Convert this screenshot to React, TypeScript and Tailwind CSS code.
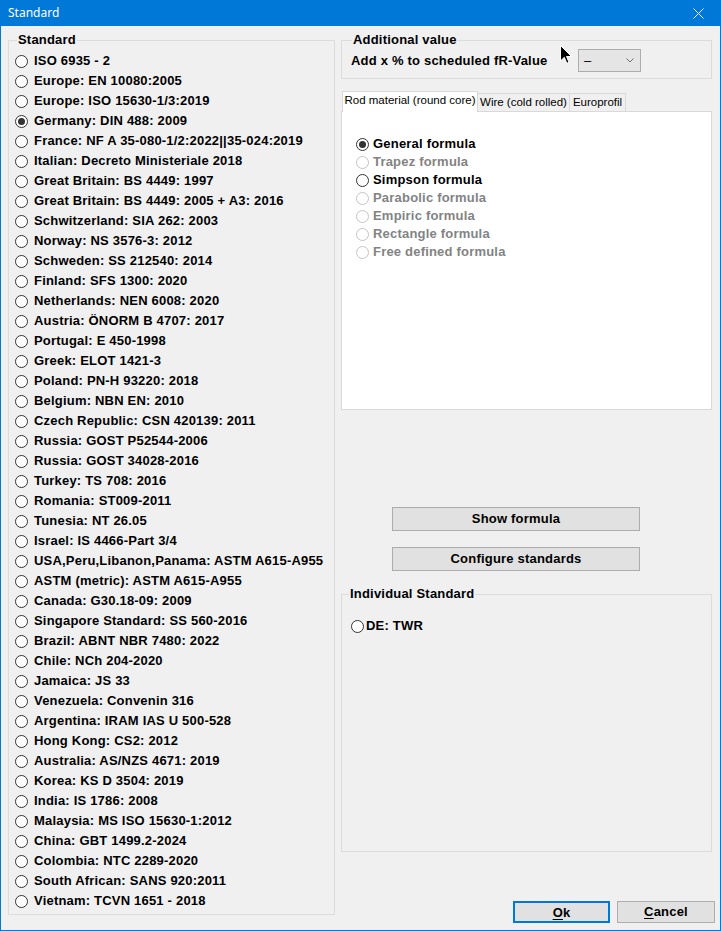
import React from 'react';
import clsx from 'clsx';

const standards = [
  'ISO 6935 - 2',
  'Europe: EN 10080:2005',
  'Europe: ISO 15630-1/3:2019',
  'Germany: DIN 488: 2009',
  'France: NF A 35-080-1/2:2022||35-024:2019',
  'Italian: Decreto Ministeriale 2018',
  'Great Britain: BS 4449: 1997',
  'Great Britain: BS 4449: 2005 + A3: 2016',
  'Schwitzerland: SIA 262: 2003',
  'Norway: NS 3576-3: 2012',
  'Schweden: SS 212540: 2014',
  'Finland: SFS 1300: 2020',
  'Netherlands: NEN 6008: 2020',
  'Austria: ÖNORM B 4707: 2017',
  'Portugal: E 450-1998',
  'Greek: ELOT 1421-3',
  'Poland: PN-H 93220: 2018',
  'Belgium: NBN EN: 2010',
  'Czech Republic: CSN 420139: 2011',
  'Russia: GOST P52544-2006',
  'Russia: GOST 34028-2016',
  'Turkey: TS 708: 2016',
  'Romania: ST009-2011',
  'Tunesia: NT 26.05',
  'Israel: IS 4466-Part 3/4',
  'USA,Peru,Libanon,Panama: ASTM A615-A955',
  'ASTM (metric): ASTM A615-A955',
  'Canada: G30.18-09: 2009',
  'Singapore Standard: SS 560-2016',
  'Brazil: ABNT NBR 7480: 2022',
  'Chile: NCh 204-2020',
  'Jamaica: JS 33',
  'Venezuela: Convenin 316',
  'Argentina: IRAM IAS U 500-528',
  'Hong Kong: CS2: 2012',
  'Australia: AS/NZS 4671: 2019',
  'Korea: KS D 3504: 2019',
  'India: IS 1786: 2008',
  'Malaysia: MS ISO 15630-1:2012',
  'China: GBT 1499.2-2024',
  'Colombia: NTC 2289-2020',
  'South African: SANS 920:2011',
  'Vietnam: TCVN 1651 - 2018',
];

const formulas = [
  { label: 'General formula', checked: true },
  { label: 'Trapez formula', disabled: true },
  { label: 'Simpson formula' },
  { label: 'Parabolic formula', disabled: true },
  { label: 'Empiric formula', disabled: true },
  { label: 'Rectangle formula', disabled: true },
  { label: 'Free defined formula', disabled: true },
];

const Radio = ({ checked, disabled }: { checked?: boolean; disabled?: boolean }) => (
  <span
    className={clsx(
      'flex h-[13px] w-[13px] shrink-0 items-center justify-center rounded-full border bg-white',
      disabled ? 'border-[#c4c4c4]' : 'border-[#333333]'
    )}
  >
    {checked && <span className="h-[7px] w-[7px] rounded-full bg-[#333333]" />}
  </span>
);

export default function App() {
  return (
    <div
      className="relative flex h-[931px] w-[721px] flex-col border-x border-b border-[#0078d7] bg-[#f0f0f0] text-black"
      style={{ fontFamily: '"Liberation Sans", Arial, sans-serif' }}
    >
      {/* title bar */}
      <div className="flex h-[26px] shrink-0 items-center justify-between bg-[#0078d7] pl-[7px] pr-[16px] text-white">
        <span className="font-['Noto_Sans'] text-[12px]">Standard</span>
        <svg width="11" height="11" viewBox="0 0 11 11" className="mt-px">
          <path d="M0.5 0.5 L10.5 10.5 M10.5 0.5 L0.5 10.5" stroke="white" strokeWidth="1" />
        </svg>
      </div>

      <div className="flex flex-1 text-[13px] font-bold tracking-[0.2px]">
        {/* left group */}
        <fieldset className="ml-[7px] mt-[6px] w-[327px] self-start border border-[#dcdcdc] px-[6px] pb-[3px]">
          <legend className="ml-[2px] px-[1px] leading-[16px]">Standard</legend>
          <div className="pt-[3px]">
            {standards.map((s) => (
              <div key={s} className="flex h-[20px] items-center gap-[6px] whitespace-nowrap">
                <Radio checked={s === 'Germany: DIN 488: 2009'} />
                <span>{s}</span>
              </div>
            ))}
          </div>
        </fieldset>

        {/* right column */}
        <div className="ml-[6px] mt-[6px] flex w-[374px] flex-col">
          <fieldset className="w-[371px] border border-[#dcdcdc] px-[9px] pb-[6px]">
            <legend className="ml-[1px] px-[1px] leading-[16px]">Additional value</legend>
            <div className="mt-px flex items-center">
              <span className="w-[227px] whitespace-nowrap">Add x % to scheduled fR-Value</span>
              <div className="flex h-[23px] w-[63px] items-center justify-between border border-[#adadad] bg-[#e5e5e5] pl-[5px] pr-[6px] font-normal">
                <span>–</span>
                <svg width="8" height="5" viewBox="0 0 8 5">
                  <path d="M0.5 0.5 L4 4 L7.5 0.5" stroke="#6d6d6d" fill="none" strokeWidth="1" />
                </svg>
              </div>
            </div>
          </fieldset>

          {/* tabs */}
          <div className="mt-[12px] flex h-[20px] items-end text-[11.5px] font-normal tracking-normal">
            <div className="relative z-10 -mb-px ml-px flex h-[21px] w-[136px] items-center justify-center border border-b-0 border-[#d9d9d9] bg-white pb-[2px]">
              Rod material (round core)
            </div>
            <div className="flex h-[18px] w-[92px] items-center justify-center border border-b-0 border-l-0 border-[#d9d9d9]">
              Wire (cold rolled)
            </div>
            <div className="flex h-[18px] w-[56px] items-center justify-center border border-b-0 border-l-0 border-[#d9d9d9]">
              Europrofil
            </div>
          </div>
          <div className="h-[299px] w-[371px] border border-[#d9d9d9] bg-white pl-[14px] pt-[23px]">
            {formulas.map((f) => (
              <div
                key={f.label}
                className={clsx('flex h-[18px] items-center gap-[4px]', f.disabled && 'text-[#838383]')}
              >
                <Radio checked={f.checked} disabled={f.disabled} />
                <span>{f.label}</span>
              </div>
            ))}
          </div>

          <button className="ml-[51px] mt-[97px] h-[24px] w-[248px] border border-[#adadad] bg-[#e1e1e1]">
            Show formula
          </button>
          <button className="ml-[51px] mt-[16px] h-[24px] w-[248px] border border-[#adadad] bg-[#e1e1e1]">
            Configure standards
          </button>

          <fieldset className="mt-[15px] h-[266px] w-[371px] border border-[#dcdcdc] px-[9px]">
            <legend className="-ml-[2px] px-[1px] leading-[16px]">Individual Standard</legend>
            <div className="mt-[15px] flex h-[18px] items-center gap-[2px]">
              <Radio />
              <span>DE: TWR</span>
            </div>
          </fieldset>

          <div className="mb-[7px] mt-auto flex justify-end gap-[7px]">
            <button className="h-[22px] w-[97px] border-2 border-[#0078d7] bg-[#e1e1e1]">
              <span className="underline underline-offset-2">O</span>k
            </button>
            <button className="h-[22px] w-[98px] border border-[#adadad] bg-[#e1e1e1]">
              <span className="underline underline-offset-2">C</span>ancel
            </button>
          </div>
        </div>
      </div>

      {/* mouse cursor */}
      <svg className="absolute left-[559px] top-[45px]" width="13" height="20" viewBox="0 0 13 20">
        <path d="M0.5 0.5 L0.5 16 L4.3 12.3 L6.8 18.3 L9 17.3 L6.5 11.5 L11.5 11.5 Z" fill="black" stroke="white" strokeWidth="1" />
      </svg>
    </div>
  );
}
